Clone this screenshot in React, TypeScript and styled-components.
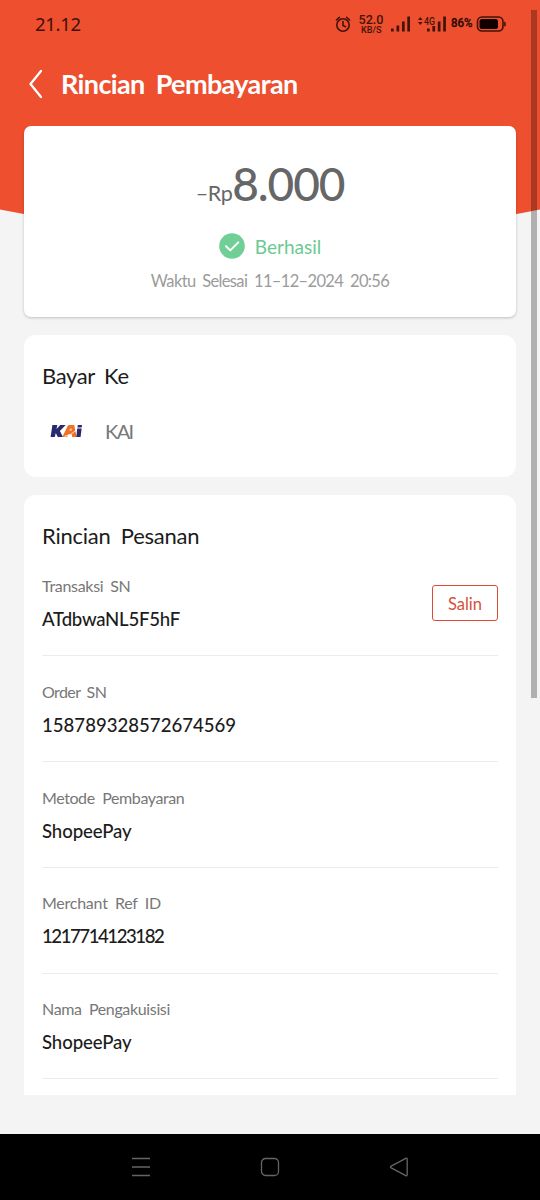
import React from "react";
import styled, { createGlobalStyle } from "styled-components";

const GlobalStyle = createGlobalStyle`
  * { box-sizing: border-box; }
  body { margin: 0; background: #f4f4f4; }
  h1, h2, p { margin: 0; }
`;

const Screen = styled.div`
  position: relative;
  width: 540px;
  height: 1200px;
  display: flex;
  flex-direction: column;
  overflow: hidden;
  background: #f4f4f4;
  font-family: Lato, "Open Sans", sans-serif;
  color: #1c1c1c;
`;

const Backdrop = styled.svg`
  position: absolute;
  top: 0;
  left: 0;
`;

const Text = styled.span<{
  $size: number;
  $line: number;
  $weight?: number;
  $color?: string;
  $spacing?: number;
  $word?: number;
}>`
  display: block;
  white-space: nowrap;
  font-size: ${(p) => p.$size}px;
  line-height: ${(p) => p.$line}px;
  font-weight: ${(p) => p.$weight ?? 400};
  color: ${(p) => p.$color ?? "#1c1c1c"};
  letter-spacing: ${(p) => p.$spacing ?? 0}px;
  word-spacing: ${(p) => p.$word ?? 0}px;
`;

const StatusBar = styled.header`
  position: relative;
  height: 48px;
  flex: none;
  display: flex;
  justify-content: space-between;
  padding: 0 34px 0 35px;
`;

const Clock = styled.span`
  font: 400 18.5px/48px "Noto Sans", sans-serif;
  letter-spacing: -0.3px;
  color: #401008;
`;

const StatusIcons = styled.svg`
  display: block;
  font-family: Roboto, sans-serif;
`;

const TitleBar = styled.div`
  position: relative;
  height: 78px;
  flex: none;
  display: flex;
  align-items: flex-start;
  padding: 20px 0 0 28px;
  gap: 17px;
`;

const BackIcon = styled.svg`
  margin-top: 1px;
`;

const Content = styled.main`
  position: relative;
  height: 969px;
  flex: none;
  display: flex;
  flex-direction: column;
  gap: 18px;
  padding: 0 24px;
  overflow: hidden;
`;

const Card = styled.section<{ $height?: number }>`
  flex: none;
  height: ${(p) => (p.$height ? `${p.$height}px` : "auto")};
  padding: 25px 18px 0;
  border-radius: 12px;
  background: #fff;
`;

const AmountCard = styled(Card)`
  display: flex;
  flex-direction: column;
  align-items: center;
  padding: 30px 0 0;
  border-radius: 7px;
  box-shadow: 0 1px 3px rgba(0, 0, 0, 0.22);
`;

const Amount = styled.div`
  display: flex;
  align-items: baseline;
  height: 56px;
`;

const Status = styled.div`
  display: flex;
  align-items: center;
  gap: 10px;
  height: 26px;
  margin-top: 21px;
`;

const StatusLabel = styled.div`
  padding-top: 2px;
`;

const Completed = styled.div`
  margin-top: 11px;
`;

const Merchant = styled.div`
  display: flex;
  align-items: center;
  gap: 21px;
  margin-top: 25px;
  padding-left: 8px;
`;

const Rows = styled.div`
  margin-top: -1.5px;
`;

const Row = styled.div`
  display: flex;
  justify-content: space-between;
  height: 105.75px;
  padding-top: 23.5px;
  border-bottom: 1px solid #ececec;
`;

const CopyButton = styled.button`
  width: 66px;
  height: 36px;
  margin-top: 11px;
  padding: 1px 0 0;
  display: flex;
  align-items: center;
  justify-content: center;
  border: 1.5px solid #dc4c35;
  border-radius: 3px;
  background: #fff;
  font-family: inherit;
`;

const ScrollThumb = styled.div`
  position: absolute;
  top: 10px;
  right: 3px;
  width: 6px;
  height: 688px;
  background: rgba(0, 0, 0, 0.28);
`;

const NavBar = styled.nav`
  height: 66px;
  margin-top: auto;
  display: flex;
  align-items: center;
  justify-content: center;
  gap: 109px;
  background: #000;
`;

const details = [
  { label: "Transaksi SN", value: "ATdbwaNL5F5hF", tight: -0.3, word: 3, valueSpacing: -0.25, copy: true },
  { label: "Order SN", value: "158789328572674569", tight: -0.6, word: 3, valueSpacing: 0 },
  { label: "Metode Pembayaran", value: "ShopeePay", tight: -0.42, word: 4, valueSpacing: -0.1 },
  { label: "Merchant Ref ID", value: "1217714123182", tight: -0.25, word: 3.5, valueSpacing: -1.45 },
  { label: "Nama Pengakuisisi", value: "ShopeePay", tight: -0.35, word: 3.5, valueSpacing: -0.1 },
];

function Indicators() {
  return (
    <StatusIcons width="171" height="48" viewBox="335 0 171 48">
      <g fill="none" stroke="#42130a" strokeWidth="1.6" strokeLinecap="round">
        <circle cx="343" cy="25" r="6.2" />
        <path d="M343 21.5v4l2.6 1.2M336.4 20l3-2.7M349.6 20l-3-2.7" />
      </g>
      <g fill="#42130a">
        <text x="358.5" y="24" fontSize="12" fontWeight="500" textLength="25" lengthAdjust="spacingAndGlyphs">52.0</text>
        <text x="361" y="32.6" fontSize="8.8" fontWeight="500" textLength="20.5" lengthAdjust="spacingAndGlyphs">KB/S</text>
        <rect x="391" y="28.5" width="2.7" height="3" />
        <rect x="396.5" y="25.5" width="2.7" height="6" />
        <rect x="402" y="21.5" width="2.7" height="10" />
        <rect x="407.3" y="16.5" width="2.7" height="15" />
        <path d="M418 20l2.3-3 2.3 3zM418 22l2.3 3 2.3-3z" />
        <text x="424" y="25" fontSize="10.5" fontWeight="500" textLength="11" lengthAdjust="spacingAndGlyphs">4G</text>
        <rect x="427" y="28.5" width="2.7" height="3" />
        <rect x="432.4" y="26" width="2.7" height="5.5" />
        <rect x="437.8" y="21.5" width="2.7" height="10" />
        <rect x="443.2" y="16.5" width="2.7" height="15" />
      </g>
      <text x="451" y="26.8" fontSize="12.5" fontWeight="500" fill="#2b0904" stroke="#2b0904" strokeWidth="0.3" textLength="21.5" lengthAdjust="spacingAndGlyphs">86%</text>
      <rect x="477.5" y="17" width="25.5" height="14" rx="4.5" fill="none" stroke="#42130a" strokeWidth="1.6" />
      <rect x="479.5" y="19" width="18.5" height="10" rx="2.5" fill="#100" />
      <path d="M504.2 21.5q1.6 0 1.6 1.5v2q0 1.5-1.6 1.5z" fill="#42130a" />
    </StatusIcons>
  );
}

function KaiLogo() {
  return (
    <svg width="34" height="18" viewBox="50 421 34 18">
      <path d="M52.4 424h4.9l-.8 4 3.8-4h5.4l-5.8 6 3.1 6h-5.2l-2-4-1 4h-4.2z" fill="#29296f" />
      <path d="M62.3 436l5.2-10.8q.7-1.2 2.1-1.2h4.6l2.4 12h-4.4l-.4-2.6h-3.3l-1.4 2.6z" fill="#f07026" />
      <path d="M69.4 429.6l1.8-2.6.4 2.6z" fill="#fff" />
      <path d="M64.5 435.4q7-1.1 11.7-6.2" fill="none" stroke="#fff" strokeWidth="0.8" />
      <path d="M77.2 427.6h4.4l-1 8.4h-4.3z" fill="#29296f" />
      <path d="M77.9 424h4.2l-.5 2.6h-4.2z" fill="#29296f" />
    </svg>
  );
}

export default function App() {
  return (
    <>
      <GlobalStyle />
      <Screen>
        <Backdrop width="540" height="240" viewBox="0 0 540 240">
          <path d="M0 0H540V209.5Q270 264 0 209.5Z" fill="#ee4f2f" />
        </Backdrop>
        <StatusBar>
          <Clock>21.12</Clock>
          <Indicators />
        </StatusBar>
        <TitleBar>
          <BackIcon width="16" height="30" viewBox="0 0 16 30">
            <path d="M13 2L2.5 15L13 28" fill="none" stroke="#fff" strokeWidth="2.3" strokeLinecap="round" strokeLinejoin="round" />
          </BackIcon>
          <Text as="h1" $size={27} $line={32} $weight={700} $color="#fff" $spacing={-0.62} $word={5}>Rincian Pembayaran</Text>
        </TitleBar>
        <Content>
          <AmountCard $height={191}>
            <Amount>
              <Text $size={21.5} $line={56} $color="#666" $spacing={-0.4}>–Rp</Text>
              <Text $size={46} $line={56} $weight={500} $color="#666" $spacing={-1.1}>8.000</Text>
            </Amount>
            <Status>
              <svg width="26" height="26" viewBox="0 0 26 26">
                <circle cx="13" cy="13" r="12.8" fill="#6fcf97" />
                <path d="M7 13.2l4.3 4.2 8-8" fill="none" stroke="#fff" strokeWidth="2" strokeLinecap="round" strokeLinejoin="round" />
              </svg>
              <StatusLabel>
                <Text $size={19} $line={26} $color="#6bc991">Berhasil</Text>
              </StatusLabel>
            </Status>
            <Completed>
              <Text $size={16.5} $line={22} $color="#9b9b9b" $spacing={-0.65} $word={3.2}>Waktu Selesai 11–12–2024 20:56</Text>
            </Completed>
          </AmountCard>
          <Card $height={142}>
            <Text as="h2" $size={22} $line={31} $spacing={-0.4} $word={4.5}>Bayar Ke</Text>
            <Merchant>
              <KaiLogo />
              <Text $size={20} $line={30} $color="#777" $spacing={-1.6}>KAI</Text>
            </Merchant>
          </Card>
          <Card $height={650}>
            <Text as="h2" $size={22} $line={32} $spacing={-0.25} $word={5}>Rincian Pesanan</Text>
            <Rows>
              {details.map((d) => (
                <Row key={d.label}>
                  <div>
                    <Text $size={16} $line={24} $color="#777" $spacing={d.tight} $word={d.word}>{d.label}</Text>
                    <Text $size={18.6} $line={42} $weight={500} $spacing={d.valueSpacing}>{d.value}</Text>
                  </div>
                  {d.copy && (
                    <CopyButton>
                      <Text $size={16.5} $line={32} $color="#d5503c">Salin</Text>
                    </CopyButton>
                  )}
                </Row>
              ))}
            </Rows>
          </Card>
        </Content>
        <ScrollThumb />
        <NavBar>
          <svg width="20" height="20" viewBox="0 0 20 20">
            <path d="M1 1.5h18M1 10h18M1 18.5h18" fill="none" stroke="#656565" strokeWidth="1.5" />
          </svg>
          <svg width="20" height="20" viewBox="0 0 20 20">
            <rect x="1.5" y="1.5" width="17" height="17" rx="4" fill="none" stroke="#656565" strokeWidth="1.3" />
          </svg>
          <svg width="20" height="20" viewBox="0 0 20 20">
            <path d="M2.2 9.1L16.8 1.4q1.4-.6 1.4 1v15.2q0 1.6-1.4 1L2.2 10.9q-1.6-.9 0-1.8z" fill="none" stroke="#656565" strokeWidth="1.3" />
          </svg>
        </NavBar>
      </Screen>
    </>
  );
}
